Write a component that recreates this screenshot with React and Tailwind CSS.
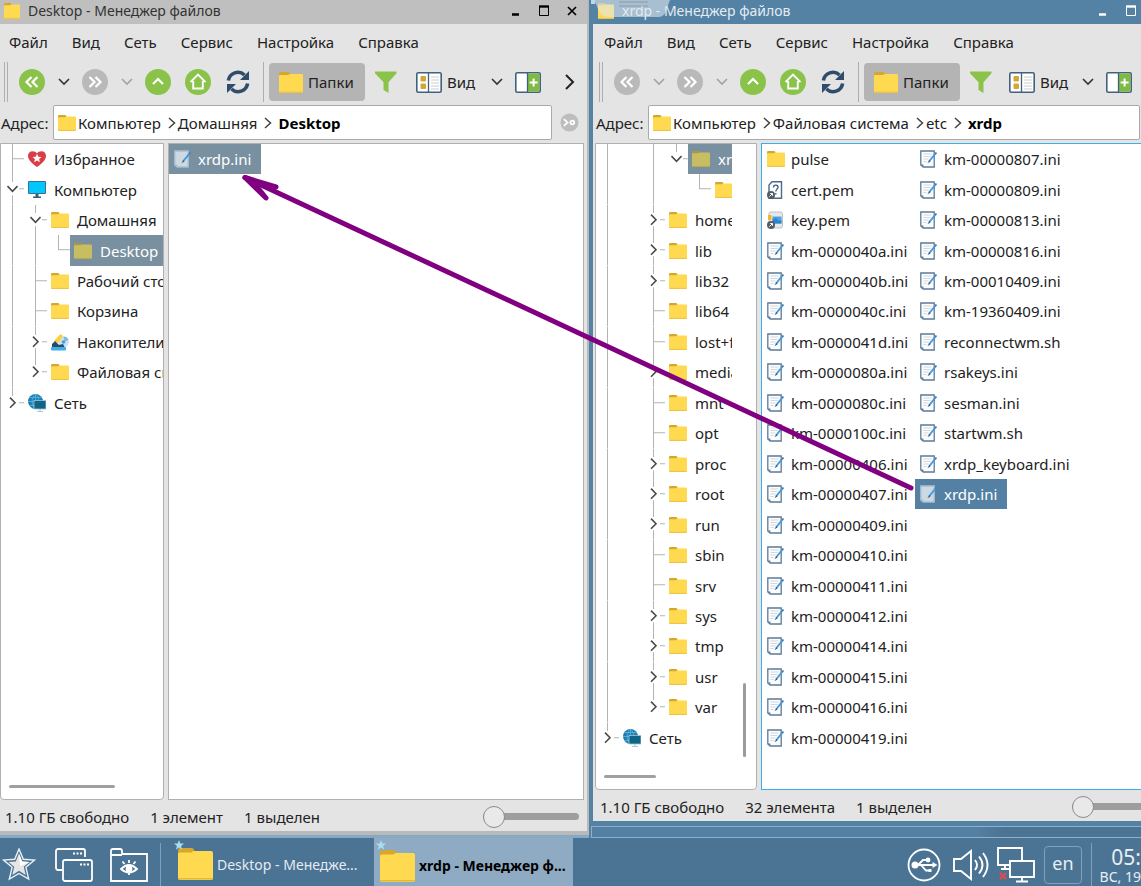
import clsx from "clsx";

const HOME_TREE = [
  { guides: "T", icon: "heart", name: "Избранное" },
  { guides: "v", icon: "computer", name: "Компьютер" },
  { guides: "|v", icon: "folder", name: "Домашняя" },
  { guides: "||L", icon: "folder", name: "Desktop", selected: true },
  { guides: "|T", icon: "folder", name: "Рабочий стол" },
  { guides: "|T", icon: "folder", name: "Корзина" },
  { guides: "|>", icon: "drives", name: "Накопители" },
  { guides: "|)", icon: "folder", name: "Файловая система" },
  { guides: ")", icon: "network", name: "Сеть" },
];

const ETC_TREE = [
  { guides: "| |V", icon: "folder", name: "xrdp", selected: true },
  { guides: "| | L", icon: "folder", name: "pulse" },
  { guides: "| >", icon: "folder", name: "home" },
  { guides: "| >", icon: "folder", name: "lib" },
  { guides: "| >", icon: "folder", name: "lib32" },
  { guides: "| T", icon: "folder", name: "lib64" },
  { guides: "| T", icon: "folder", name: "lost+found" },
  { guides: "| >", icon: "folder", name: "media" },
  { guides: "| T", icon: "folder", name: "mnt" },
  { guides: "| T", icon: "folder", name: "opt" },
  { guides: "| >", icon: "folder", name: "proc" },
  { guides: "| >", icon: "folder", name: "root" },
  { guides: "| >", icon: "folder", name: "run" },
  { guides: "| T", icon: "folder", name: "sbin" },
  { guides: "| T", icon: "folder", name: "srv" },
  { guides: "| >", icon: "folder", name: "sys" },
  { guides: "| >", icon: "folder", name: "tmp" },
  { guides: "| >", icon: "folder", name: "usr" },
  { guides: "| )", icon: "folder", name: "var" },
  { guides: ")", icon: "network", name: "Сеть" },
];

const ETC_FILES = [
  { name: "pulse", icon: "folder" },
  { name: "cert.pem", icon: "unknown" },
  { name: "key.pem", icon: "key" },
  { name: "km-0000040a.ini" },
  { name: "km-0000040b.ini" },
  { name: "km-0000040c.ini" },
  { name: "km-0000041d.ini" },
  { name: "km-0000080a.ini" },
  { name: "km-0000080c.ini" },
  { name: "km-0000100c.ini" },
  { name: "km-00000406.ini" },
  { name: "km-00000407.ini" },
  { name: "km-00000409.ini" },
  { name: "km-00000410.ini" },
  { name: "km-00000411.ini" },
  { name: "km-00000412.ini" },
  { name: "km-00000414.ini" },
  { name: "km-00000415.ini" },
  { name: "km-00000416.ini" },
  { name: "km-00000419.ini" },
  { name: "km-00000807.ini" },
  { name: "km-00000809.ini" },
  { name: "km-00000813.ini" },
  { name: "km-00000816.ini" },
  { name: "km-00010409.ini" },
  { name: "km-19360409.ini" },
  { name: "reconnectwm.sh" },
  { name: "rsakeys.ini" },
  { name: "sesman.ini" },
  { name: "startwm.sh" },
  { name: "xrdp_keyboard.ini" },
  { name: "xrdp.ini", selected: true },
];

const MENU = ["Файл", "Вид", "Сеть", "Сервис", "Настройка", "Справка"];

function Folder({ className, dim }) {
  return (
    <svg viewBox="0 0 18 16" preserveAspectRatio="none" className={clsx("shrink-0", className)}>
      <path d="M0 1.2Q0 0 1 0h6q1 0 1.400 1.200V4H0z" fill={dim ? "#a89a45" : "#d6a72f"} />
      <path
        d="M0 3q0-.8.8-.8h6L8 1.500h9q1 0 1 1V15q0 1-1 1H1q-1 0-1-1z"
        fill={dim ? "#c9bd62" : "#ffd94f"}
      />
      <path d="M.3 15.400h17.400" stroke={dim ? "#aa9f4e" : "#e3b93a"} strokeWidth=".7" />
    </svg>
  );
}

function TextFile({ selected }) {
  return (
    <svg viewBox="0 0 18 18" className="size-[18px] shrink-0">
      <path
        d="M.8 1H14.200v16H3.200L.8 15z"
        fill={selected ? "#cbd9e4" : "#fbfcfd"}
        stroke={selected ? "#a9bfd1" : "#5c7a98"}
        strokeWidth="1.300"
      />
      <path d="M.8 14.500h2.600V17z" fill={selected ? "#a9bfd1" : "#5c7a98"} />
      <path d="M3.500 4h8M3.500 6.500h7M3.500 9h5M3.500 11.500h3" stroke="#d3d8dd" strokeWidth="1" />
      <path d="M15.800 3.200L9 11.500" stroke="#459ade" strokeWidth="1.900" />
      <path d="M16.400 2.500l-1.200 1.400" stroke="#5c7a98" strokeWidth="1.900" />
      <path d="M9.400 10L7.400 13.200l3-1.800z" fill="#3c5670" />
    </svg>
  );
}

function ItemIcon({ kind, selected }) {
  if (kind === "folder") return <Folder className="h-4 w-[18px]" dim={selected} />;
  if (kind === "heart") {
    return (
      <svg viewBox="0 0 18 16" className="h-4 w-[18px] shrink-0">
        <path
          d="M9 16C3 11.500 0 8.500 0 5 0 2 2 .3 4.600.3 6.500.3 8 1 9 2.400 10 1 11.500.3 13.400.3 16 .3 18 2 18 5c0 3.500-3 6.500-9 11z"
          fill="#db3d48"
        />
        <path
          d="M9 2.800l1.300 2.900 3.200.3-2.400 2.100.7 3.100L9 9.600l-2.800 1.600.7-3.100L4.500 6l3.200-.3z"
          fill="#fff"
        />
      </svg>
    );
  }
  if (kind === "computer") {
    return (
      <svg viewBox="0 0 18 17" className="h-[17px] w-[18px] shrink-0">
        <rect width="18" height="13" rx="1" fill="#3a6f93" />
        <rect x="1" y="1" width="16" height="11" fill="#00c8ff" />
        <path d="M7.500 13h3v2.500H13V17H5v-1.500h2.500z" fill="#3a5c7a" />
      </svg>
    );
  }
  if (kind === "drives") {
    return (
      <svg viewBox="0 0 18 18" className="size-[18px] shrink-0">
        <circle cx="12.500" cy="9" r="5.400" fill="#cfe0ee" />
        <path d="M12.500 3.600a5.400 5.400 0 0 1 5 3.400l-4 1.500z" fill="#7db7e4" />
        <circle cx="12.500" cy="9" r="1.800" fill="#4b9bd6" />
        <path d="M3 8L9.500 1l2.500 2L7 10z" fill="#fbd037" />
        <path d="M1 11l3-3 4 4 4-1 2 4H1z" fill="#2b4a66" />
        <rect x="0" y="14" width="15" height="3.500" rx="1" fill="#3daef0" />
      </svg>
    );
  }
  if (kind === "network") {
    return (
      <svg viewBox="0 0 18 18" className="size-[18px] shrink-0">
        <circle cx="7.500" cy="7.500" r="7.500" fill="#1b7fb3" />
        <path
          d="M7.500 0v15M0 7.500h15M2 3.500h11M2 11.500h11M7.500 0C3 4 3 11 7.500 15M7.500 0C12 4 12 11 7.500 15"
          stroke="#5fb4dd"
          strokeWidth=".8"
          fill="none"
        />
        <rect x="6" y="6.500" width="12" height="8.500" fill="#0f6488" stroke="#9fc6d8" strokeWidth=".8" />
        <path d="M9 17.500h6M12 15v2.500" stroke="#b5c6cf" strokeWidth="1.200" />
      </svg>
    );
  }
  if (kind === "unknown") {
    return (
      <svg viewBox="0 0 18 18" className="size-[18px] shrink-0">
        <path d="M5 .8H14.500v16.400H2V4z" fill="#fdfdfe" stroke="#4b6b8c" strokeWidth="1.400" />
        <path
          d="M6.500 6.500c0-3.500 5-3 4.500 0-.2 1.500-2.200 2-2.200 4M8.800 12v1.500"
          fill="none"
          stroke="#35587a"
          strokeWidth="1.300"
        />
        <circle cx="4" cy="14" r="4" fill="#555c63" />
        <path d="M2.300 15.700l3-3M3.200 12.500h2.300v2.300" stroke="#fff" strokeWidth="1" fill="none" />
      </svg>
    );
  }
  if (kind === "key") {
    return (
      <svg viewBox="0 0 18 18" className="size-[18px] shrink-0">
        <rect x="2" y="1" width="13.500" height="16" rx="2" fill="#e6e9eb" stroke="#b4babf" strokeWidth=".9" />
        <path d="M1 4h3.500v5H1z" fill="#f0b52c" />
        <rect x="5.500" y="5.500" width="9" height="7" fill="#4ba3e6" />
        <path d="M5.500 8.500L9 7l3 3 2.500-1v3.500h-9z" fill="#2f83cc" />
        <circle cx="4" cy="14" r="4" fill="#555c63" />
        <path d="M2.300 15.700l3-3M3.200 12.500h2.300v2.300" stroke="#fff" strokeWidth="1" fill="none" />
      </svg>
    );
  }
  return <TextFile selected={selected} />;
}

// one 23px column of the tree's connector lines
function Guide({ type }) {
  const line = { stroke: "#b4b4b4", strokeWidth: 1, fill: "none" };
  const arrow = { stroke: "#4a4a4a", strokeWidth: 1.600, fill: "none" };
  const paths = {
    "|": <path d="M11.500 0V30" {...line} />,
    T: <path d="M11.500 0V30M11.500 14.500H23" {...line} />,
    L: <path d="M11.500 0V14.500H23" {...line} />,
    ">": (
      <>
        <path d="M11.500 0V8M11.500 21V30M18 14.500H23" {...line} />
        <path d="M9 9.500L14 14.500L9 19.500" {...arrow} />
      </>
    ),
    ")": (
      <>
        <path d="M11.500 0V8M18 14.500H23" {...line} />
        <path d="M9 9.500L14 14.500L9 19.500" {...arrow} />
      </>
    ),
    v: (
      <>
        <path d="M11.500 0V8M11.500 21V30M18 14.500H23" {...line} />
        <path d="M6.500 12L11.500 17L16.500 12" {...arrow} />
      </>
    ),
    V: (
      <>
        <path d="M11.500 0V8M18 14.500H23" {...line} />
        <path d="M6.500 12L11.500 17L16.500 12" {...arrow} />
      </>
    ),
  };
  return (
    <svg viewBox="0 0 23 30" preserveAspectRatio="none" className="h-full w-[23px] shrink-0">
      {paths[type]}
    </svg>
  );
}

function TreePane({ items, scrollBar }) {
  return (
    <div className="flex h-full flex-col">
      <div className="flex">
        <ul className="grid h-[609px] min-w-0 flex-1 grid-rows-20 overflow-hidden">
          {items.map((item) => (
            <li key={item.name} className="flex min-h-0 whitespace-nowrap">
              {item.guides.split("").map((type, i) => (
                <Guide key={i} type={type} />
              ))}
              <span
                className={clsx(
                  "flex flex-1 items-center gap-2 pl-1",
                  item.selected && "bg-[#7890a0] text-white"
                )}
              >
                <ItemIcon kind={item.icon} selected={item.selected} />
                {item.name}
              </span>
            </li>
          ))}
        </ul>
        {scrollBar && (
          <div className="-mb-1 flex w-6 flex-col items-center justify-end">
            <div className="h-[74px] w-[3px] rounded-full bg-[#9b9b9b]" />
          </div>
        )}
      </div>
      <div className="mt-auto px-2 pb-[11px]">
        <div className={clsx("h-[3px] rounded-full bg-[#a0a0a0]", scrollBar ? "w-[52px]" : "w-[106px]")} />
      </div>
    </div>
  );
}

function FileItem({ file, active }) {
  return (
    <li
      className={clsx(
        "flex min-h-0 w-fit items-center gap-1.5 pr-2.5 pl-[5px] whitespace-nowrap",
        file.selected && (active ? "bg-[#5380a3] text-white" : "bg-[#7890a0] text-white")
      )}
    >
      <ItemIcon kind={file.icon} selected={file.selected} />
      {file.name}
    </li>
  );
}

function RoundButton({ label, disabled, children }) {
  return (
    <button type="button" aria-label={label} disabled={disabled} className="flex w-10 shrink-0 justify-center">
      <svg viewBox="0 0 26 26" className="size-[26px]" fill="none" stroke="#fff" strokeWidth="2.200">
        <circle cx="13" cy="13" r="13" fill={disabled ? "#b9b9b9" : "#8bc34a"} stroke="none" />
        {children}
      </svg>
    </button>
  );
}

function Chevron({ label, disabled }) {
  return (
    <button type="button" aria-label={label} disabled={disabled} className="flex w-[23px] shrink-0 justify-center">
      <svg viewBox="0 0 12 8" className="h-2 w-3" fill="none" stroke={disabled ? "#a3a3a3" : "#333"} strokeWidth="1.600">
        <path d="M1 1l5 5 5-5" />
      </svg>
    </button>
  );
}

function CrumbArrow() {
  return (
    <svg viewBox="0 0 8 12" className="h-3 w-2 shrink-0" fill="none" stroke="#444" strokeWidth="1.500">
      <path d="M1 1l5.500 5L1 11" />
    </svg>
  );
}

function Toolbar({ canGoBack, overflow }) {
  return (
    <div className="mt-0.5 flex h-10 shrink-0 items-center overflow-hidden">
      <div className="ml-1 h-10 w-1 shrink-0 border-x border-[#aeaeae]" />
      <div className="w-1 shrink-0" />
      <RoundButton label="Назад" disabled={!canGoBack}>
        <path d="M12.500 8l-5 5 5 5M18.500 8l-5 5 5 5" />
      </RoundButton>
      <Chevron label="История назад" disabled={!canGoBack} />
      <RoundButton label="Вперёд" disabled>
        <path d="M7.500 8l5 5-5 5M13.500 8l5 5-5 5" />
      </RoundButton>
      <Chevron label="История вперёд" disabled />
      <RoundButton label="Вверх">
        <path d="M8 15l5-5 5 5" />
      </RoundButton>
      <RoundButton label="Домой">
        <path d="M5.500 13.200L13 5.500l7.500 7.700M8.200 12v7.500h9.600V12" strokeWidth="1.900" />
      </RoundButton>
      <button type="button" aria-label="Обновить" className="flex w-10 shrink-0 justify-center">
        <svg viewBox="0 0 24 24" className="size-6" fill="none" stroke="#2f4d6b" strokeWidth="3.600">
          <path d="M2.400 10.500A9.600 9.600 0 0 1 18.500 5" />
          <path d="M21.600 13.500A9.600 9.600 0 0 1 5.500 19" />
          <path d="M23 1v9h-9z" fill="#2f4d6b" stroke="none" />
          <path d="M1 23v-9h9z" fill="#2f4d6b" stroke="none" />
        </svg>
      </button>
      <div className="mx-[5px] h-10 w-px shrink-0 bg-[#aeaeae]" />
      <button
        type="button"
        aria-pressed="true"
        className="flex h-[38px] w-24 shrink-0 items-center gap-[5px] rounded-sm bg-[#b4b4b4] pl-2.5"
      >
        <Folder className="h-[21px] w-6" />
        Папки
      </button>
      <button type="button" aria-label="Фильтр" className="ml-px flex w-10 shrink-0 justify-center">
        <svg viewBox="0 0 22 22" className="size-[22px]">
          <path d="M0 .5h21.500v1.800l-8 9V22L8.500 19v-7.700L0 2.300z" fill="#8bc34a" />
        </svg>
      </button>
      <button type="button" className={clsx("flex shrink-0 items-center gap-[5px]", overflow ? "ml-2.5" : "ml-2")}>
        <svg viewBox="0 0 26 21" className="h-[21px] w-[26px]">
          <rect x=".8" y=".8" width="24.400" height="19.400" rx="1.500" fill="#fff" stroke="#41617f" strokeWidth="1.600" />
          <path d="M12.500 1v19" stroke="#41617f" strokeWidth="1.300" />
          <rect x="4.500" y="4" width="5.500" height="5.500" rx="1" fill="#d1a73a" />
          <rect x="4.500" y="11.500" width="5.500" height="5.500" rx="1" fill="#d1a73a" />
          <path d="M15 5h8M15 8h8M15 11h8M15 14h8M15 17h8" stroke="#ccc" />
        </svg>
        Вид
      </button>
      <div className={overflow ? "w-2.5 shrink-0" : "w-2 shrink-0"} />
      <Chevron label="Варианты вида" />
      <button type="button" aria-label="Новая панель" className="ml-[7px] shrink-0">
        <svg viewBox="0 0 26 21" className="h-[21px] w-[26px]">
          <rect x=".8" y=".8" width="24.400" height="19.400" rx="1.500" fill="#fff" stroke="#41617f" strokeWidth="1.600" />
          <rect x="13" y="1.600" width="11.400" height="17.800" fill="#7dbb42" />
          <path d="M12.500 1v19" stroke="#41617f" strokeWidth="1.300" />
          <path d="M18.600 6.500v8M14.600 10.500h8" stroke="#fff" strokeWidth="2" />
        </svg>
      </button>
      {overflow && (
        <button type="button" aria-label="Ещё" className="ml-6 shrink-0">
          <svg viewBox="0 0 10 16" className="h-4 w-2.5" fill="none" stroke="#222" strokeWidth="2">
            <path d="M1 1l7 7-7 7" />
          </svg>
        </button>
      )}
    </div>
  );
}

function AddressBar({ path, clear }) {
  return (
    <div className="mt-0.5 mb-px flex h-[37px] shrink-0 items-center">
      <span className="w-[53px] shrink-0 pl-px">Адрес:</span>
      <nav
        aria-label="Адрес"
        className="flex h-[35px] min-w-0 flex-1 items-center overflow-hidden rounded-xs border border-[#a9a9a9] bg-white pl-1 whitespace-nowrap"
      >
        <Folder className="h-4 w-[18px]" />
        {path.map((part, i) => (
          <span key={part} className="flex items-center">
            <button
              type="button"
              className={clsx(i === path.length - 1 ? "ml-1.5 font-bold text-black" : "mr-[7px] ml-0.5")}
            >
              {part}
            </button>
            {i < path.length - 1 && <CrumbArrow />}
          </span>
        ))}
      </nav>
      {clear ? (
        <button type="button" aria-label="Очистить" className="mx-2 shrink-0">
          <svg viewBox="0 0 20 20" className="size-[19px]" fill="none" stroke="#fff" strokeWidth="1.800">
            <circle cx="10" cy="10" r="9.500" fill="#bdbdbd" stroke="none" />
            <path d="M4 6.500L8 10l-4 3.500" />
            <circle cx="13" cy="10" r="2" />
          </svg>
        </button>
      ) : (
        <div className="w-px shrink-0" />
      )}
    </div>
  );
}

function StatusBar({ parts, className }) {
  return (
    <footer className="flex h-[31px] shrink-0 items-center gap-[21px] pt-0.5 pl-[5px] whitespace-nowrap">
      {parts.map((part) => (
        <span key={part}>{part}</span>
      ))}
      <input
        type="range"
        aria-label="Размер значков"
        defaultValue="0"
        className={clsx(
          "ml-auto h-[7px] w-24 shrink-0 appearance-none rounded-full bg-[#9e9e9e] [&::-webkit-slider-thumb]:size-[22px] [&::-webkit-slider-thumb]:appearance-none [&::-webkit-slider-thumb]:rounded-full [&::-webkit-slider-thumb]:border [&::-webkit-slider-thumb]:border-[#8c8c8c] [&::-webkit-slider-thumb]:bg-[#e9e9e9]",
          className
        )}
      />
    </footer>
  );
}

function TitleBar({ title, active }) {
  return (
    <header
      className={clsx(
        "flex h-6 shrink-0 items-center gap-2 overflow-hidden pb-0.5 whitespace-nowrap",
        active ? "bg-[#5482a4] pl-[5px] text-[#e3ecf3]" : "bg-[#bfbfbf] pl-1 text-[#333]"
      )}
    >
      <Folder className="h-4 w-4" />
      <h1 className="text-[14px]">{title}</h1>
      <div className={clsx("ml-auto flex items-center", active ? "-mr-8 text-white" : "pr-px text-black")}>
        <button type="button" aria-label="Свернуть" className="flex w-7 justify-center">
          <svg viewBox="0 0 12 12" className="size-3" stroke="currentColor" strokeWidth="2.500">
            <path d="M2 9.500h7" />
          </svg>
        </button>
        <button type="button" aria-label="Развернуть" className="flex w-7 justify-center">
          <svg viewBox="0 0 12 12" className="size-3" fill="none" stroke="currentColor">
            <path d="M1.500 1v9.500h9V1" strokeWidth="1" />
            <path d="M1 1.500h10" strokeWidth="2.400" />
          </svg>
        </button>
        <button type="button" aria-label="Закрыть" className="flex w-7 justify-center">
          <svg viewBox="0 0 12 12" className="size-3" stroke="currentColor" strokeWidth="1.700">
            <path d="M2 2l8 8M10 2l-8 8" />
          </svg>
        </button>
      </div>
    </header>
  );
}

function FileWindow({ title, active, tree, files, path, status }) {
  return (
    <section
      className={clsx(
        "flex min-h-0 min-w-0 flex-1 flex-col overflow-hidden",
        active ? "border-b-[5px] border-l-[4px] border-[#5482a4]" : "border-r-2 border-b-[4px] border-[#b9b9b9]"
      )}
    >
      <TitleBar title={title} active={active} />
      <div className={clsx("flex min-h-0 flex-1 flex-col bg-[#e4e4e4]", active && "pl-0.5")}>
        <nav className="flex h-9 shrink-0 items-center gap-6 overflow-hidden pl-[9px] whitespace-nowrap">
          {MENU.map((item) => (
            <button key={item} type="button">
              {item}
            </button>
          ))}
        </nav>
        <Toolbar canGoBack={!active} overflow={!active} />
        <AddressBar path={path} clear={!active} />
        <div className={clsx("mt-px flex min-h-0 flex-1 gap-1", !active && "pr-[3px]")}>
          <aside
            className={clsx(
              "shrink-0 overflow-hidden rounded-b-sm border border-[#b0b0b0] bg-white",
              active ? "w-[162px]" : "w-[164px]"
            )}
          >
            <TreePane items={tree} scrollBar={active} />
          </aside>
          <div
            className={clsx(
              "min-w-0 flex-1 overflow-hidden bg-white",
              active ? "border-y border-l border-[#3daee9]" : "border border-[#b0b0b0]"
            )}
          >
            <ul className="grid h-[609px] auto-cols-[153px] grid-flow-col grid-rows-20">
              {files.map((file) => (
                <FileItem key={file.name} file={file} active={active} />
              ))}
            </ul>
          </div>
        </div>
        <StatusBar parts={status} className={active ? "-mr-[27px]" : "mr-2"} />
      </div>
    </section>
  );
}

function PinStar() {
  return (
    <svg viewBox="0 0 10 10" className="absolute top-0.5 left-0.5 size-2.5" fill="#a9dcf0">
      <path d="M5 0l1.300 3.400L10 3.600 7.100 6l1 3.800L5 7.600 1.900 9.800l1-3.800L0 3.600l3.700-.2z" />
    </svg>
  );
}

function Taskbar() {
  return (
    <footer className="flex h-12 shrink-0 items-center overflow-hidden bg-[#4b7394] whitespace-nowrap text-white">
      <button type="button" aria-label="Пуск" className="ml-0.5 shrink-0">
        <svg viewBox="0 0 34 34" className="mt-1.5 size-[34px]">
          <path
            d="M17 1l4.300 10.300 11.200.8-8.600 7.200 2.800 11.700L17 25.500 7.300 31l2.800-11.700L1.500 12.100l11.200-.8z"
            fill="none"
            stroke="#eaf1f6"
            strokeWidth="1.400"
          />
          <path d="M17 5.500l3.200 7.900 7.300.6-5.700 4.700 1.900 8.300-6.700-4.300-6.700 4.300 1.900-8.300L6.500 14l7.300-.6z" fill="#e6e6e6" />
          <path d="M17 5.500l3.200 7.900 7.300.6-9.500 4z" fill="#fff" />
        </svg>
      </button>
      <button type="button" aria-label="Рабочие столы" className="ml-[19px] shrink-0">
        <svg viewBox="0 0 38 34" className="mt-1.5 h-[34px] w-[38px]" fill="none" stroke="#fff" strokeWidth="1.800">
          <path d="M7 22H3a2 2 0 0 1-2-2V3a2 2 0 0 1 2-2h25a2 2 0 0 1 2 2v6" />
          <rect x="8" y="12" width="29" height="21" rx="2" />
          <path d="M18 5.500h9M25 16.500h9" strokeDasharray="2 1.500" />
        </svg>
      </button>
      <button type="button" aria-label="Файлы" className="ml-[17px] shrink-0">
        <svg viewBox="0 0 38 34" className="mt-1.5 h-[34px] w-[38px]" fill="none" stroke="#fff" strokeWidth="1.800">
          <path d="M1 33V3q0-2 2-2h7q2 0 2 2v3h25v27zM1 7h11" />
          <path d="M11 21q8-8 16 0-8 7-16 0z" />
          <circle cx="19" cy="21" r="2.500" fill="#fff" />
          <path d="M19 15v-3M14.500 16l-2-2.500M23.500 16l2-2.500M19 24.500V27" />
        </svg>
      </button>
      <div className="ml-3 h-[43px] w-px shrink-0 self-end bg-[#7fa0ba]" />
      <button type="button" className="relative ml-[11px] flex h-12 w-[202px] shrink-0 items-center gap-1 pl-1.5 text-left text-[14px] text-[#e3ebf2]">
        <PinStar />
        <Folder className="mt-1 h-8 w-[35px]" />
        <span className="mt-1.5 min-w-0 flex-1 truncate">Desktop - Менедже...</span>
      </button>
      <button type="button" className="relative flex h-12 w-[199px] shrink-0 items-center gap-1 bg-[#8fabc3] pl-1.5 text-left text-[14px] font-bold text-black">
        <PinStar />
        <Folder className="mt-2 h-8 w-[35px]" />
        <span className="mt-2 min-w-0 flex-1 truncate">xrdp - Менеджер ф...</span>
      </button>
      <div className="ml-auto flex shrink-0 items-center pt-1.5">
        <svg viewBox="0 0 34 34" className="size-[34px]" fill="none" stroke="#fff" strokeWidth="1.800">
          <circle cx="17" cy="17" r="15.500" />
          <path d="M8 17h19M11 17l5-5h4M14 17l5 5.500h3" />
          <circle cx="8" cy="17" r="2.600" fill="#fff" />
          <circle cx="21" cy="12" r="1.500" fill="#fff" />
          <path d="M25.500 14l5 3-5 3z" fill="#fff" stroke="none" />
          <rect x="21.500" y="21" width="3" height="3" fill="#fff" stroke="none" />
        </svg>
        <svg viewBox="0 0 36 32" className="ml-3 h-8 w-9" fill="none" stroke="#fff" strokeWidth="1.900">
          <path d="M1 10h7L18 2v28L8 22H1z" />
          <path d="M22 11q4 5 0 10M26 7.500q7 8.500 0 17M30 4q9 12 0 24" />
        </svg>
        <svg viewBox="0 0 38 36" className="ml-2 h-9 w-[38px]" fill="none" stroke="#fff" strokeWidth="1.900">
          <path d="M12 18H1V1h24v12M4 22h8M8 18v4" />
          <path d="M13 14h24v16H13zM25 30v4M19 34.500h12" />
          <path d="M3 26l6 6M9 26l-6 6" stroke="#e5484d" strokeWidth="2.400" />
        </svg>
        <button
          type="button"
          className="mr-[9px] ml-[9px] size-[38px] rounded-sm border border-[#7fa0ba] pb-1 text-[18px] text-[#e8eff5]"
        >
          en
        </button>
      </div>
      <div className="h-[43px] w-px shrink-0 self-end bg-[#7fa0ba]" />
      <time className="flex w-[49px] shrink-0 flex-col items-end text-[#e8eff5]">
        <span className="mt-1.5 text-[21px] leading-6">05:</span>
        <span className="text-[14px] leading-4">ВС, 19</span>
      </time>
    </footer>
  );
}

export default function App() {
  return (
    <div className="relative flex h-screen flex-col overflow-hidden bg-[#5380a3] font-['Noto_Sans',sans-serif] text-[15px] leading-5 text-[#222]">
      <main className="grid min-h-0 flex-1 grid-cols-[589fr_552fr]">
        <div className="flex min-h-0 min-w-0 flex-col">
          <FileWindow
            title="Desktop - Менеджер файлов"
            tree={HOME_TREE}
            files={[{ name: "xrdp.ini", selected: true }]}
            path={["Компьютер", "Домашняя", "Desktop"]}
            status={["1.10 ГБ свободно", "1 элемент", "1 выделен"]}
          />
          <div className="h-[3px] shrink-0 bg-[#86a9c4]" />
        </div>
        <div className="flex min-h-0 min-w-0 flex-col">
          <FileWindow
            active
            title="xrdp - Менеджер файлов"
            tree={ETC_TREE}
            files={ETC_FILES}
            path={["Компьютер", "Файловая система", "etc", "xrdp"]}
            status={["1.10 ГБ свободно", "32 элемента", "1 выделен"]}
          />
          <div className="ml-0.5 h-3 shrink-0 border-y border-l border-[#8fb0c8] bg-linear-to-r from-[#5380a3] from-70% to-[#4b7394] to-75%" />
        </div>
      </main>
      <Taskbar />

      {/* glass tab lying over the second title bar */}
      <svg viewBox="0 0 80 19" className="pointer-events-none absolute top-0 left-[591px] h-[19px] w-20">
        <path d="M3 0h76l-4 11q-2 6-8 6H17q-6 0-9-6z" fill="#dfe8ee" opacity=".6" />
        <path d="M28 2h29M28 6h29" stroke="#8d9ba6" strokeWidth="1" />
        <path d="M0 0h4v4H0z" fill="#b6dcec" />
      </svg>

      {/* drag arrow between the two windows */}
      <svg
        viewBox="0 0 1141 886"
        className="pointer-events-none absolute top-0 left-0 h-[886px] w-[1141px]"
        fill="none"
        stroke="#800080"
        strokeWidth="5"
        strokeLinecap="round"
        strokeLinejoin="round"
      >
        <path d="M911 488L245 177.500" />
        <path d="M266 198L245 177.500L276 187L245 177.500L258 188z" fill="#800080" />
      </svg>
    </div>
  );
}
